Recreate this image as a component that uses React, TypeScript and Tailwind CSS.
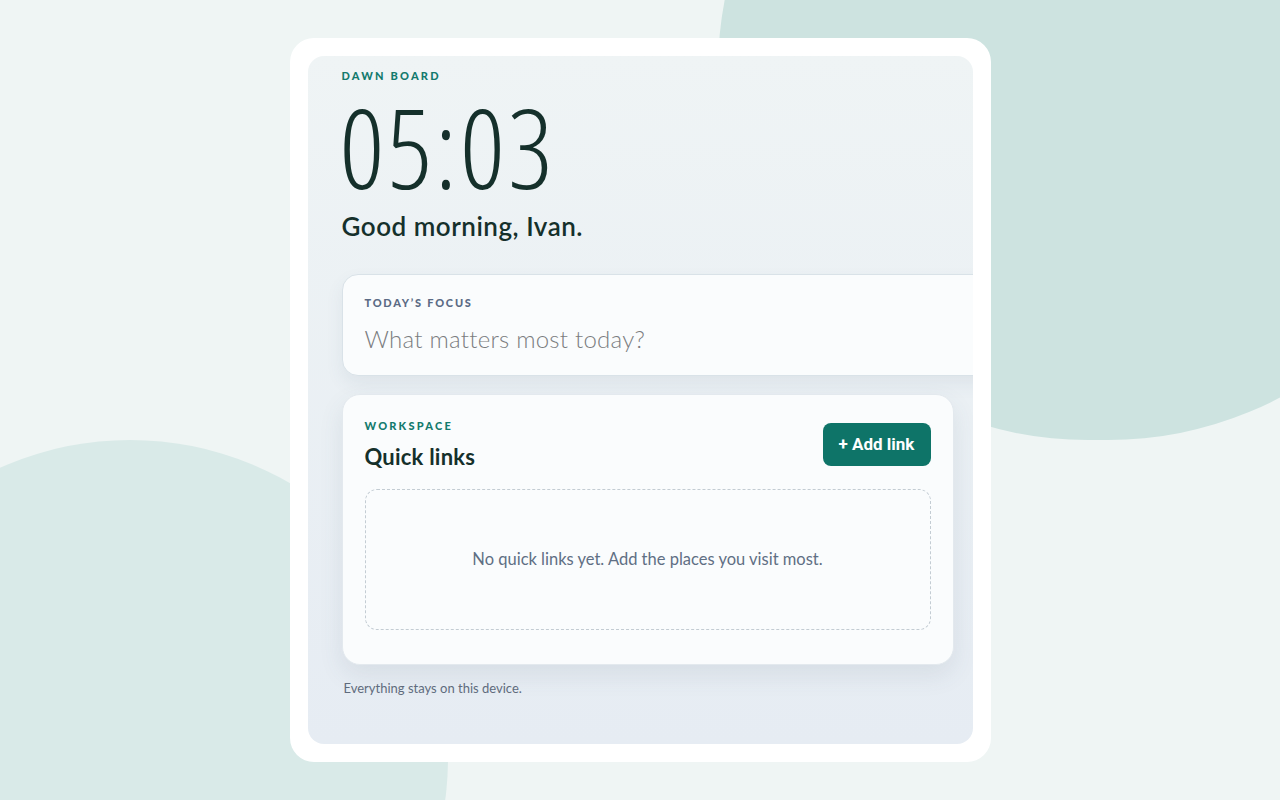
import React from "react";

export default function App() {
  return (
    <div className="relative flex h-[800px] w-[1280px] items-center justify-center overflow-hidden bg-[#eff5f4] font-['Lato','Noto_Sans',sans-serif]">
      <div className="absolute left-[718px] top-[-300px] h-[740px] w-[760px] rounded-full bg-[#cde3e0]" />
      <div className="absolute left-[-188px] top-[440px] h-[636px] w-[636px] rounded-full bg-[#d9eae8]" />

      <div className="relative h-[724px] w-[701px] rounded-[24px] bg-white p-[18px]">
        <div className="h-full w-full overflow-hidden rounded-[16px] bg-gradient-to-b from-[#eff4f5] to-[#e6ecf3] pl-[34px] pt-[12px]">
          <div className="text-[11px] font-black leading-[16px] tracking-[0.2em] text-[#137a6d]">
            DAWN BOARD
          </div>
          <div className="ml-[-2px] mt-[12px] font-['Open_Sans',sans-serif] text-[110px] font-light leading-[100px] tracking-[3px] text-[#15302b] [font-stretch:75%]">
            05:03
          </div>
          <div className="mt-[14px] text-[26px] font-semibold leading-[32px] tracking-[0.02em] text-[#15302b]">
            Good morning, Ivan.
          </div>

          <div className="mt-[32px] h-[102px] w-[660px] rounded-[16px] border border-[#d9e2e8] bg-[#fafcfd] px-[22px] pt-[20px] shadow-[0_8px_18px_rgba(70,90,110,0.08)]">
            <div className="text-[11px] font-black leading-[16px] tracking-[0.16em] text-[#5b6b85]">
              TODAY&#8217;S FOCUS
            </div>
            <div className="mt-[13px] text-[24px] font-light leading-[30px] tracking-[0.01em] text-[#7a7d80]">
              What matters most today?
            </div>
          </div>

          <div className="mt-[18px] h-[271px] w-[612px] rounded-[18px] border border-[#e3e9ee] bg-[#fafcfd] px-[22px] pt-[23px] shadow-[0_10px_24px_rgba(70,90,110,0.10)]">
            <div className="flex items-start justify-between">
              <div>
                <div className="text-[11px] font-black leading-[16px] tracking-[0.2em] text-[#137a6d]">
                  WORKSPACE
                </div>
                <div className="mt-[10px] text-[22px] font-bold leading-[26px] tracking-[0.01em] text-[#15302b]">
                  Quick links
                </div>
              </div>
              <button className="mt-[5px] h-[43px] w-[108px] rounded-[8px] bg-[#0e7468] font-['Roboto',sans-serif] text-[17px] font-bold text-white">
                + Add link
              </button>
            </div>
            <div className="mt-[19px] flex h-[141px] items-center justify-center rounded-[12px] border border-dashed border-[#c3ccd3] text-[16.5px] text-[#5f6f84]">
              No quick links yet. Add the places you visit most.
            </div>
          </div>

          <div className="ml-[2px] mt-[14px] text-[13px] leading-[18px] text-[#5f6b7d]">
            Everything stays on this device.
          </div>
        </div>
      </div>
    </div>
  );
}
